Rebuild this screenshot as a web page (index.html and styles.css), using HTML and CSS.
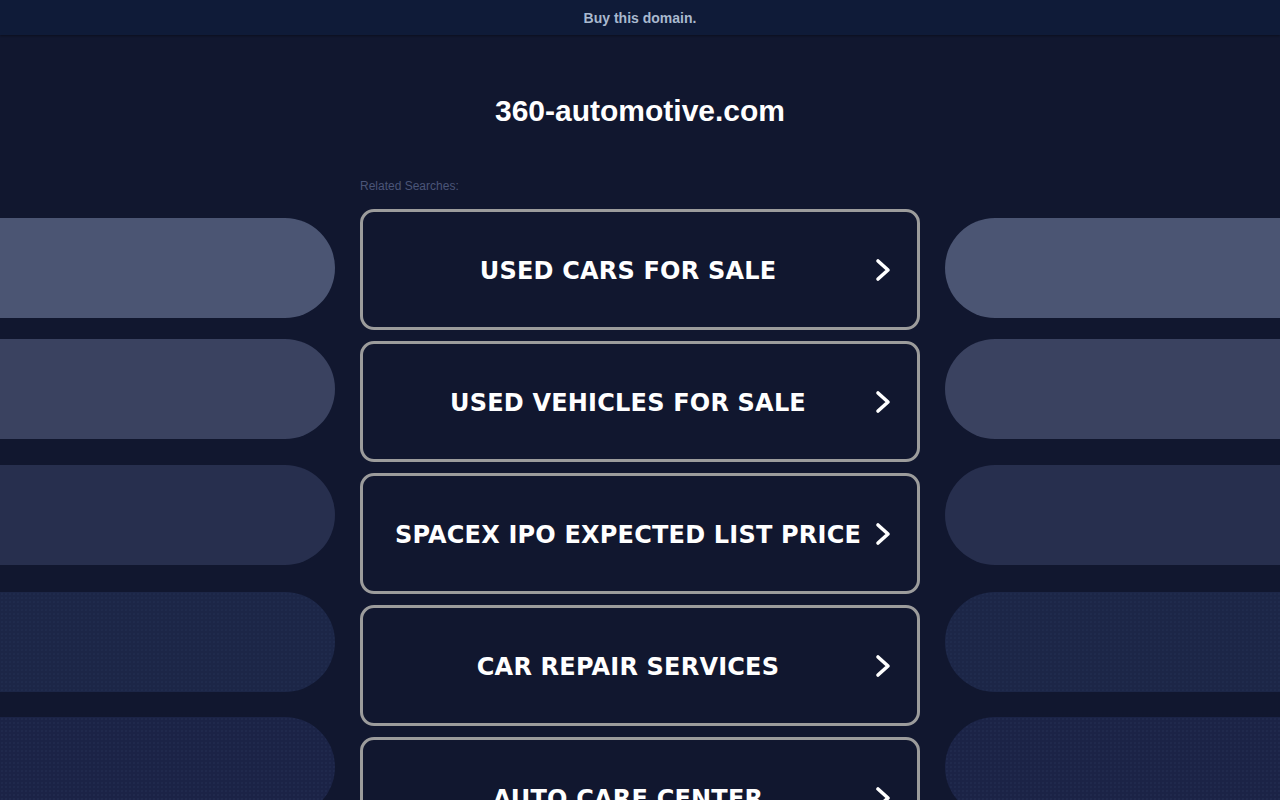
FILE: index.html
```html
<!DOCTYPE html>
<html lang="en">
<head>
<meta charset="utf-8">
<title>360-automotive.com</title>
<link rel="stylesheet" href="styles.css">
</head>
<body>
<div class="topbar"><a class="buy" href="#">Buy this domain.</a></div>
<div class="page">
  <div class="side side-left">
    <div class="pill p1"></div>
    <div class="pill p2"></div>
    <div class="pill p3"></div>
    <div class="pill p4"></div>
    <div class="pill p5"></div>
  </div>
  <main class="center">
    <h1 class="domain">360-automotive.com</h1>
    <div class="related">Related Searches:</div>
    <div class="links">
      <a class="link" href="#"><span class="label">USED CARS FOR SALE</span><svg class="chev" viewBox="0 0 16 24"><path d="M3 3 L13 12 L3 21" /></svg></a>
      <a class="link" href="#"><span class="label">USED VEHICLES FOR SALE</span><svg class="chev" viewBox="0 0 16 24"><path d="M3 3 L13 12 L3 21" /></svg></a>
      <a class="link" href="#"><span class="label">SPACEX IPO EXPECTED LIST PRICE</span><svg class="chev" viewBox="0 0 16 24"><path d="M3 3 L13 12 L3 21" /></svg></a>
      <a class="link" href="#"><span class="label">CAR REPAIR SERVICES</span><svg class="chev" viewBox="0 0 16 24"><path d="M3 3 L13 12 L3 21" /></svg></a>
      <a class="link" href="#"><span class="label">AUTO CARE CENTER</span><svg class="chev" viewBox="0 0 16 24"><path d="M3 3 L13 12 L3 21" /></svg></a>
    </div>
  </main>
  <div class="side side-right">
    <div class="pill p1"></div>
    <div class="pill p2"></div>
    <div class="pill p3"></div>
    <div class="pill p4"></div>
    <div class="pill p5"></div>
  </div>
</div>
</body>
</html>
```
FILE: styles.css
```css
html, body {
  margin: 0;
  padding: 0;
  height: 100%;
  overflow: hidden;
}
body {
  background: #11172f;
  font-family: "Liberation Sans", Arial, sans-serif;
}
.topbar {
  height: 35px;
  background: #0f1b38;
  box-shadow: 0 1px 2px rgba(0, 0, 0, 0.35);
  display: flex;
  align-items: center;
  justify-content: center;
  position: relative;
  z-index: 1;
}
.buy {
  color: #a9b9cf;
  font-weight: bold;
  font-size: 14px;
  text-decoration: none;
  line-height: 16px;
  padding-top: 1px;
}
.page {
  display: grid;
  grid-template-columns: 335px 560px 335px;
  column-gap: 25px;
}
.side {
  padding-top: 183px;
  display: flex;
  flex-direction: column;
  gap: 25px;
}
.pill {
  height: 100px;
  flex: none;
}
.side-left .pill {
  border-radius: 0 50px 50px 0;
}
.side-right .pill {
  border-radius: 50px 0 0 50px;
}
.side .p2 { margin-top: -4px; }
.side .p3 { margin-top: 1px; }
.side .p4 { margin-top: 2px; }
.p1 { background: #4b5573; }
.p2 { background: #3a4260; }
.p3 { background: #272f4e; }
.p4 {
  background-color: #1c2647;
  background-image: radial-gradient(rgba(90, 110, 160, 0.09) 0.6px, transparent 0.9px);
  background-size: 4px 4px;
}
.p5 {
  background-color: #1b2346;
  background-image: radial-gradient(rgba(90, 110, 160, 0.11) 0.6px, transparent 0.9px);
  background-size: 4px 4px;
}
.center {
  display: flex;
  flex-direction: column;
}
.domain {
  margin: 58px 0 0;
  text-align: center;
  color: #ffffff;
  font-size: 30px;
  line-height: 36px;
  font-weight: bold;
}
.related {
  margin-top: 50px;
  color: #4b5578;
  font-size: 12px;
  line-height: 14px;
}
.links {
  margin-top: 16px;
  display: flex;
  flex-direction: column;
  gap: 11px;
}
.link {
  position: relative;
  height: 115px;
  border: 3px solid #9c9c9c;
  border-radius: 14px;
  display: flex;
  align-items: center;
  justify-content: center;
  padding-right: 24px;
  color: #ffffff;
  text-decoration: none;
  background: #11172f;
  flex: none;
}
.label {
  font-family: "DejaVu Sans", Verdana, sans-serif;
  font-weight: bold;
  font-size: 24px;
  line-height: 28px;
  white-space: nowrap;
  padding-top: 3px;
  letter-spacing: 0.2px;
}
.chev {
  position: absolute;
  right: 26px;
  top: 50%;
  width: 16px;
  height: 24px;
  margin-top: -12px;
  fill: none;
  stroke: #ffffff;
  stroke-width: 3.6;
  stroke-linecap: round;
  stroke-linejoin: round;
}
```
